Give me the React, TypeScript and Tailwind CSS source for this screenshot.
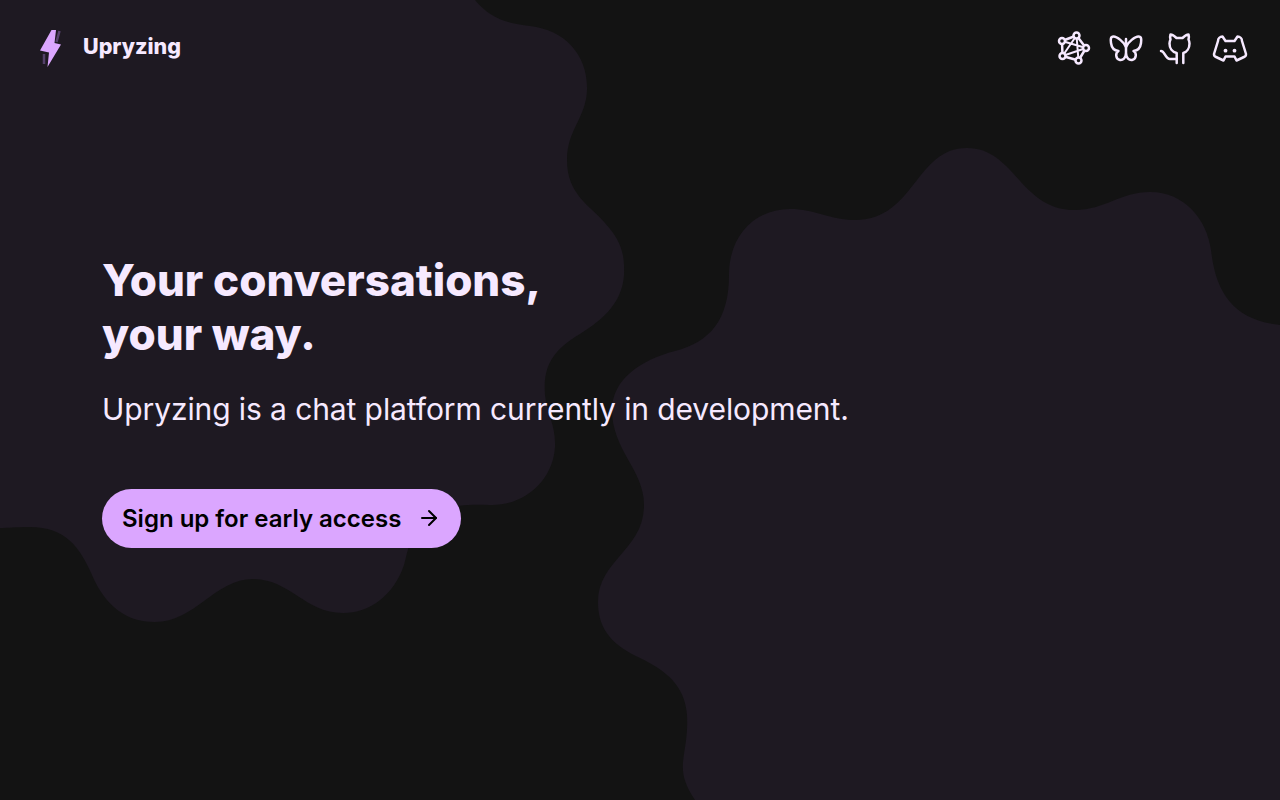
import { ArrowRight } from "lucide-react";

const iconProps = {
  width: 40,
  height: 40,
  viewBox: "0 0 40 40",
  fill: "none",
  stroke: "currentColor",
  strokeWidth: 2.5,
  strokeLinecap: "round" as const,
  strokeLinejoin: "round" as const,
};

function Blobs() {
  return (
    <svg className="absolute inset-0 h-full w-full" viewBox="0 0 1280 800" fill="#1e1922">
      <path d="M0 0H475C490 18 505 23 530 26C565 30 588 55 587 90C586 118 567 130 567 160C567 195 590 205 605 223C620 240 625 252 624 275C622 305 600 322 575 337C550 353 543 370 545 395C547 415 556 425 555 447C553 480 525 506 490 505C465 504 440 505 423 522C410 535 408 550 404 565C394 595 370 613 343 613C305 613 290 579 253 579C215 579 195 622 155 622C125 622 105 605 92 575C80 547 65 527 30 527C15 527 8 528 0 528Z" />
      <path d="M967 148C1015 148 1020 210 1075 210C1105 210 1120 192 1150 192C1185 192 1207 220 1211 250C1216 295 1235 320 1280 325V800H695C685 785 682 775 683 762C685 745 688 735 687 715C685 685 665 670 640 658C615 646 598 632 598 602C598 560 644 550 644 505C644 470 612 450 612 410C612 380 640 360 675 351C710 342 729 320 729 275C729 235 755 209 790 209C815 209 830 220 855 220C915 220 915 148 967 148Z" />
    </svg>
  );
}

function FediverseIcon() {
  return (
    <svg {...iconProps}>
      <path d="M22.5 7.5L32 20L24.500 32.500L8.500 28L8 13Z" />
      <path d="M8 13L32 20L8.500 28L22.500 7.500L24.500 32.500" strokeWidth="2" />
      <circle cx="22.500" cy="7.500" r="3" fill="#131313" />
      <circle cx="32" cy="20" r="3" fill="#131313" />
      <circle cx="24.500" cy="32.500" r="3" fill="#131313" />
      <circle cx="8.500" cy="28" r="3" fill="#131313" />
      <circle cx="8" cy="13" r="3" fill="#131313" />
    </svg>
  );
}

function ButterflyIcon() {
  return (
    <svg {...iconProps}>
      <path d="M20 11V26" />
      <path d="M20 19C18 14 11 8.500 7.500 8.500C4.500 8.500 4.500 11.500 5 15C5.500 19 7.500 22.500 12.500 23C9 25 9.500 31 14 32C17 32.500 19.500 30 20 26C20.500 30 23 32.500 26 32C30.500 31 31 25 27.500 23C32.500 22.500 34.500 19 35 15C35.500 11.500 35.500 8.500 32.500 8.500C29 8.500 22 14 20 19Z" />
    </svg>
  );
}

function GithubIcon() {
  return (
    <svg {...iconProps}>
      <path d="M20.700 35V25C16 24 13.500 20 13.500 15.500C13.500 14 14 12.500 14.500 11.500C14 10 14 8 14.500 6.500C16 6.500 18.500 8 20.500 10H26.500C28.500 8 30.500 6.500 32.500 6.500C33 8 33 10 32.500 11.500C33 12.500 33.500 14 33.500 15.500C33.500 20 31 24 27.300 25V35" />
      <path d="M5 23C9 23 9 31 14 31H20.700" />
    </svg>
  );
}

function DiscordIcon() {
  return (
    <svg {...iconProps}>
      <path d="M8 13C8 10.500 10 8.500 12.500 8.500L15.500 13H24.500L27.500 8.500C30 8.500 32 10.500 32 13L36 26C36 27.500 35.500 28.500 34 29L26.500 32.500L24.500 28.500H15.500L13.500 32.500L6 29C4.500 28.500 4 27.500 4 26Z" />
      <circle cx="15.500" cy="22.700" r="1.900" fill="currentColor" stroke="none" />
      <circle cx="24.500" cy="22.700" r="1.900" fill="currentColor" stroke="none" />
    </svg>
  );
}

export default function App() {
  return (
    <div className="relative h-screen w-full overflow-hidden bg-[#131313] font-['Inter',sans-serif] text-[#f6e9ff]">
      <Blobs />
      <div className="relative flex h-full flex-col">
        <header className="flex h-[96px] items-center justify-between pl-[34px] pr-[30px]">
          <div className="flex items-center gap-[17px]">
            <svg width="32" height="44" viewBox="0 0 32 44">
              <path d="M25.500 5L22.500 16M10 28L10 38" stroke="#54406a" strokeWidth="2.500" fill="none" />
              <path d="M17.500 4L22 4L20.500 17L27 18.500L13.500 41L15 26.500L6 24.500Z" fill="#dba6ff" />
            </svg>
            <span className="mb-[2px] text-[21.500px] font-extrabold leading-none">Upryzing</span>
          </div>
          <nav className="flex items-center">
            <FediverseIcon />
            <div className="ml-[12px]">
              <ButterflyIcon />
            </div>
            <div className="ml-[10px]">
              <GithubIcon />
            </div>
            <div className="ml-[14px]">
              <DiscordIcon />
            </div>
          </nav>
        </header>
        <main className="pl-[102px] pt-[157px]">
          <h1 className="text-[44px] font-extrabold leading-[54px]">
            Your conversations,
            <br />
            your way.
          </h1>
          <p className="mt-[28px] text-[30px] font-normal leading-[40px] tracking-[-0.1px]">Upryzing is a chat platform currently in development.</p>
          <button className="mt-[60px] flex h-[59px] items-center gap-[16px] rounded-full bg-[#dba6ff] px-[20px] text-[24px] font-semibold text-black">
            Sign up for early access
            <ArrowRight size={24} strokeWidth={2} className="mb-[1px]" />
          </button>
        </main>
      </div>
    </div>
  );
}
